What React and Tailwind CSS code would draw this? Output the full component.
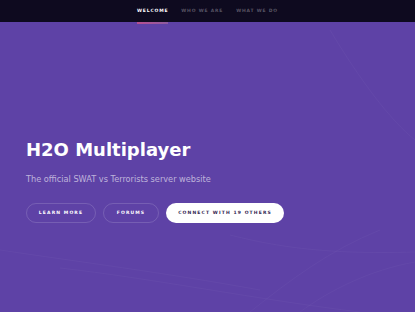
import React from 'react';

const navItems = ['Welcome', 'Who we are', 'What we do'];

export default function App() {
  return (
    <div className="relative h-[312px] w-[415px] overflow-hidden bg-[#5e42a6]" style={{ fontFamily: '"DejaVu Sans", sans-serif' }}>
      {/* faint background strokes */}
      <svg className="absolute inset-0 h-full w-full" viewBox="0 0 415 312" fill="none">
        <g stroke="#ffffff" strokeOpacity="0.03" strokeWidth="1">
          <path d="M0 250 C 80 262, 160 272, 260 290" />
          <path d="M60 268 C 150 278, 260 300, 360 312" />
          <path d="M250 312 C 290 280, 330 250, 380 230" />
          <path d="M300 312 C 330 290, 370 270, 415 262" />
          <path d="M230 235 C 270 245, 320 255, 415 252" />
          <path d="M330 30 C 360 80, 390 120, 415 140" />
        </g>
      </svg>

      <nav className="relative flex h-[22px] items-center justify-center gap-[13px] bg-[#0e0a1f] pl-[0px]">
        {navItems.map((item, i) => (
          <div key={item} className="relative flex h-full items-center">
            <span className={`text-[4.5px] font-bold uppercase tracking-[0.18em] ${i === 0 ? 'text-white' : 'text-white/30'}`}>
              {item}
            </span>
            {i === 0 && (
              <div className="absolute -bottom-[2px] left-0 h-[2px] w-full bg-gradient-to-r from-[#b74e91] to-[#8c5aa0]" />
            )}
          </div>
        ))}
      </nav>

      <div className="relative px-[26px] pt-[115px]">
        <h1 className="text-[18px] font-bold leading-[26px] text-white">H2O Multiplayer</h1>
        <p className="mt-[10px] text-[8.2px] leading-[12px] text-white/60">The official SWAT vs Terrorists server website</p>
        <div className="mt-[18px] flex gap-[7px]">
          <button className="h-[20px] w-[70px] rounded-full border border-white/15 text-[4.5px] font-bold uppercase tracking-[0.25em] text-white">
            Learn more
          </button>
          <button className="h-[20px] w-[56px] rounded-full border border-white/15 text-[4.5px] font-bold uppercase tracking-[0.25em] text-white">
            Forums
          </button>
          <button className="h-[20px] w-[118px] rounded-full bg-white text-[4.5px] font-bold uppercase tracking-[0.25em] text-[#312450]">
            Connect with 19 others
          </button>
        </div>
      </div>
    </div>
  );
}
